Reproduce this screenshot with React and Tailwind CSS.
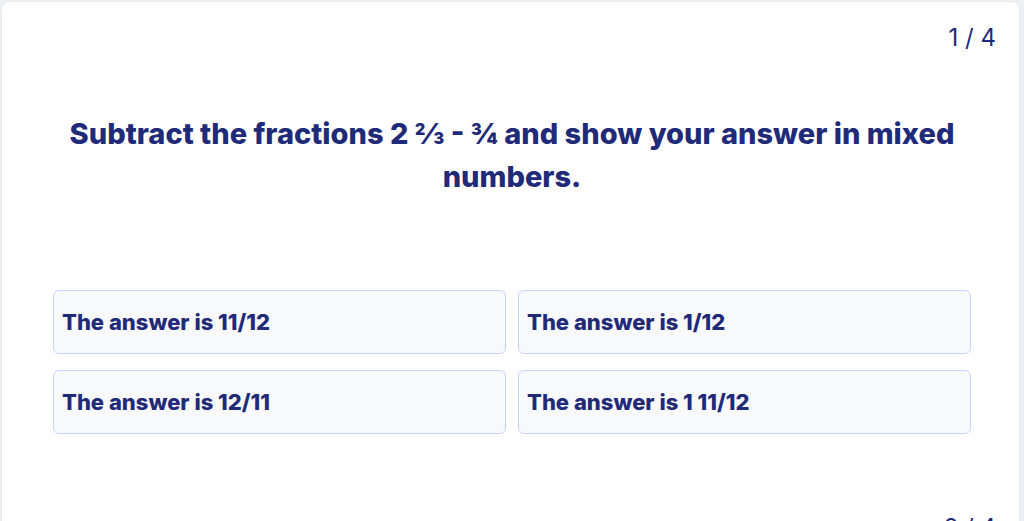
import React from 'react';

const questions = [
  {
    text: 'Subtract the fractions 2 ⅔ - ¾ and show your answer in mixed numbers.',
    answers: ['The answer is 11/12', 'The answer is 1/12', 'The answer is 12/11', 'The answer is 1 11/12'],
  },
  {
    text: 'Add the fractions 1 ½ + ¼ and show your answer in mixed numbers.',
    answers: ['The answer is 1 3/4', 'The answer is 7/4', 'The answer is 1 1/4', 'The answer is 2/6'],
  },
];

function Question({ q, index, total }) {
  return (
    <section className="h-[490px] pl-[51px] pr-[48px] pt-[20px]">
      <div className="flex justify-end">
        <span className="mr-[-25px] text-[24px] leading-[32px] text-[#1f2a78]">
          {index + 1} / {total}
        </span>
      </div>
      <h2 className="mx-auto mt-[58px] max-w-[917px] text-center text-[29px] font-extrabold leading-[43px] text-[#1f2a78]">
        {q.text}
      </h2>
      <div className="mt-[92px] grid grid-cols-2 gap-x-[12px] gap-y-[16px]">
        {q.answers.map((a) => (
          <button
            key={a}
            className="flex h-[64px] items-center rounded-[6px] border border-[#c9d3fb] bg-[#f8f9fb] px-[8px] text-left text-[22px] font-extrabold text-[#1f2a78]"
          >
            {a}
          </button>
        ))}
      </div>
    </section>
  );
}

export default function App() {
  return (
    <div
      className="min-h-screen bg-[#eef0f5] pl-[1px] pr-[4px] pt-[1px]"
      style={{ fontFamily: 'Inter, "Noto Sans", sans-serif' }}
    >
      <div className="rounded-[8px] border border-[#e6e8ef] bg-white">
        {questions.map((q, i) => (
          <Question key={i} q={q} index={i} total={4} />
        ))}
      </div>
    </div>
  );
}
